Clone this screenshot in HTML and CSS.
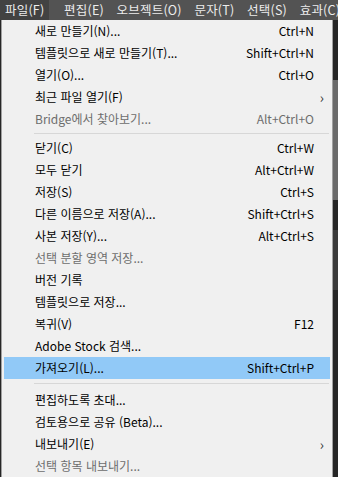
FILE: index.html
```html
<!DOCTYPE html>
<html lang="ko">
<head>
    <meta charset="UTF-8">
    <meta name="viewport" content="width=device-width, initial-scale=1.0">
    <title>파일 메뉴</title>
    <link rel="stylesheet" href="styles.css">
</head>
<body>
    <header class="menubar">
        <span class="top-item active">파일(F)</span>
        <span class="top-item">편집(E)</span>
        <span class="top-item">오브젝트(O)</span>
        <span class="top-item">문자(T)</span>
        <span class="top-item">선택(S)</span>
        <span class="top-item">효과(C)</span>
    </header>
    <div class="workspace">
        <ul class="menu">
            <li class="item"><span class="label">새로 만들기(N)...</span><span class="key">Ctrl+N</span></li>
            <li class="item"><span class="label">템플릿으로 새로 만들기(T)...</span><span class="key">Shift+Ctrl+N</span></li>
            <li class="item"><span class="label">열기(O)...</span><span class="key">Ctrl+O</span></li>
            <li class="item sub"><span class="label">최근 파일 열기(F)</span><span class="key"></span></li>
            <li class="item off"><span class="label">Bridge에서 찾아보기...</span><span class="key">Alt+Ctrl+O</span></li>
            <li class="sep"></li>
            <li class="item"><span class="label">닫기(C)</span><span class="key">Ctrl+W</span></li>
            <li class="item"><span class="label">모두 닫기</span><span class="key">Alt+Ctrl+W</span></li>
            <li class="item"><span class="label">저장(S)</span><span class="key">Ctrl+S</span></li>
            <li class="item"><span class="label">다른 이름으로 저장(A)...</span><span class="key">Shift+Ctrl+S</span></li>
            <li class="item"><span class="label">사본 저장(Y)...</span><span class="key">Alt+Ctrl+S</span></li>
            <li class="item off"><span class="label">선택 분할 영역 저장...</span><span class="key"></span></li>
            <li class="item"><span class="label">버전 기록</span><span class="key"></span></li>
            <li class="item"><span class="label">템플릿으로 저장...</span><span class="key"></span></li>
            <li class="item"><span class="label">복귀(V)</span><span class="key">F12</span></li>
            <li class="item"><span class="label">Adobe Stock 검색...</span><span class="key"></span></li>
            <li class="item hover"><span class="label">가져오기(L)...</span><span class="key">Shift+Ctrl+P</span></li>
            <li class="sep wide"></li>
            <li class="item"><span class="label">편집하도록 초대...</span><span class="key"></span></li>
            <li class="item"><span class="label">검토용으로 공유 (Beta)...</span><span class="key"></span></li>
            <li class="item sub"><span class="label">내보내기(E)</span><span class="key"></span></li>
            <li class="item off"><span class="label">선택 항목 내보내기...</span><span class="key"></span></li>
        </ul>
        <div class="side">
            <div class="side-panel"></div>
            <div class="side-panel short"></div>
        </div>
    </div>
</body>
</html>
```

FILE: styles.css
```css
* {
    padding: 0;
    margin: 0;
    box-sizing: border-box;
}

body {
    width: 338px;
    height: 477px;
    overflow: hidden;
    background-color: #262626;
    font-family: 'Noto Sans CJK KR', 'Noto Sans', sans-serif;
    font-size: 12px;
}

.menubar {
    height: 20px;
    display: block;
    white-space: nowrap;
    overflow: hidden;
    background-color: #535353;
    color: #ececec;
    font-size: 12.5px;
    line-height: 20px;
    letter-spacing: 0.2px;
}

.top-item {
    display: inline-block;
    height: 20px;
    vertical-align: top;
    padding: 0 4px 0 4px;
    margin-right: 1px;
}

.top-item.active {
    background-color: #424242;
    padding: 0 5px 0 5px;
    margin-right: 7px;
}

.workspace {
    display: flex;
    height: 457px;
}

.menu {
    list-style: none;
    width: 332px;
    margin-left: 1px;
    background-color: #f0f0f0;
    border-left: 1px solid #a0a0a0;
    border-right: 1px solid #a0a0a0;
    padding: 0 2px 0 2px;
    color: #000000;
}

.item {
    display: flex;
    justify-content: space-between;
    align-items: center;
    height: 22px;
    line-height: 22px;
    padding-left: 31px;
    padding-right: 16px;
    position: relative;
}

.item .key {
    text-align: right;
}

.item.off {
    color: #6d6d6d;
}

.item.hover {
    background-color: #91c9f7;
}

.item.sub::after {
    content: '\203A';
    position: absolute;
    right: 6px;
    top: 0;
    font-size: 14px;
    color: #333333;
}

.sep {
    height: 1px;
    background-color: #d7d7d7;
    margin: 3px 1px 3px 30px;
}

.sep + .item {
    margin-top: 2px;
}

.sep.wide {
    margin-top: 4px;
    margin-bottom: 5px;
}

.side {
    flex: 1;
    display: flex;
    flex-direction: column;
    padding-top: 60px;
    gap: 30px;
}

.side-panel {
    height: 120px;
    background-color: #6a6a6a;
}

.side-panel.short {
    height: 60px;
    background-color: #3a3a3a;
}
```
